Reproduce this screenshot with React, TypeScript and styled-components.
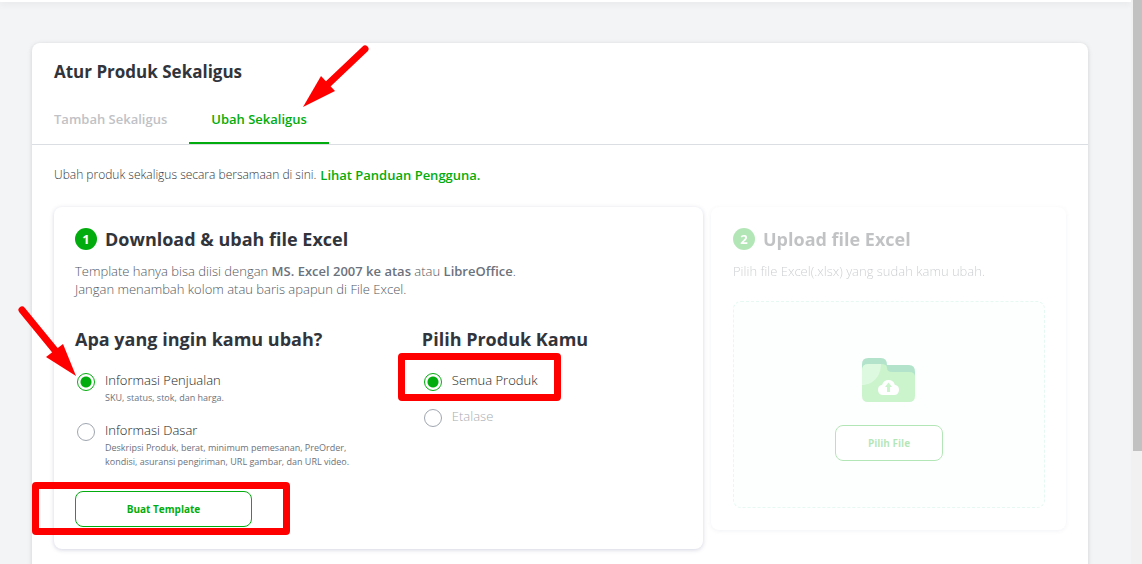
import React from "react";
import styled, { createGlobalStyle, css } from "styled-components";

const green = "#03ac0e";
const red = "#ff0000";

const GlobalStyle = createGlobalStyle`
  *, *::before, *::after { box-sizing: border-box; }
  body {
    margin: 0;
    background: #f3f4f5;
    color: #31353b;
    font-family: "Open Sans", sans-serif;
    font-size: 13px;
  }
  h1, h2, h3, p { margin: 0; }
`;

const Screen = styled.div`
  display: flex;
  height: 100vh;
  overflow: hidden;
`;

const Page = styled.div`
  flex: 1;
  min-width: 0;
`;

const TopBar = styled.header`
  height: 2px;
  background: #fff;
  box-shadow: 0 1px 6px rgba(49, 53, 59, 0.14);
`;

const ScrollTrack = styled.div`
  flex: none;
  width: 11px;
  padding-left: 2px;
  background: #f1f1f1;
`;

const ScrollThumb = styled.div`
  height: 80%;
  background: #c1c1c1;
`;

const Panel = styled.main`
  margin: 41px 43px 0 32px;
  min-height: 100vh;
  background: #fff;
  border-radius: 8px;
  box-shadow: 0 1px 4px rgba(108, 114, 124, 0.28);
`;

const Title = styled.h1`
  padding: 17px 22px 0;
  font-size: 17px;
  line-height: 24px;
  font-weight: 700;
`;

const Tabs = styled.nav`
  display: flex;
  margin-top: 10px;
  border-bottom: 1px solid #dbdee2;
`;

const Tab = styled.button<{ $active?: boolean }>`
  position: relative;
  height: 50px;
  padding: 2px 22px 0;
  border: 0;
  border-bottom: 2px solid ${(p) => (p.$active ? green : "transparent")};
  background: none;
  color: ${(p) => (p.$active ? green : "#bfc2c6")};
  font: 600 13px/20px "Open Sans", sans-serif;
  cursor: pointer;
`;

const Body = styled.div`
  padding: 20px 22px;
`;

const Intro = styled.p`
  display: flex;
  gap: 4px;
  margin-bottom: 22px;
  font-size: 12px;
  font-weight: 300;
  line-height: 20px;
`;

const GuideLink = styled.a`
  color: ${green};
  font-size: 13px;
  font-weight: 600;
  text-decoration: none;
`;

const Steps = styled.div`
  display: grid;
  grid-template-columns: 649fr 355fr;
  gap: 8px;
  align-items: start;
`;

const StepCard = styled.section<{ $disabled?: boolean }>`
  padding: 21px 21px 22px;
  border-radius: 8px;
  background: #fff;
  box-shadow: 0 1px 4px rgba(108, 114, 156, 0.3);
  ${(p) =>
    p.$disabled &&
    css`
      padding-left: 22px;
      opacity: 0.3;
    `}
`;

const StepHeading = styled.div`
  display: flex;
  align-items: center;
  gap: 8px;
`;

const StepNumber = styled.span`
  width: 22px;
  height: 22px;
  border-radius: 50%;
  background: ${green};
  color: #fff;
  font-size: 13px;
  line-height: 22px;
  font-weight: 700;
  text-align: center;
`;

const StepTitle = styled.h2`
  font-size: 18px;
  line-height: 22px;
  font-weight: 700;
`;

const StepText = styled.p`
  margin-top: 12px;
  font-weight: 300;
  line-height: 18px;
  color: #525860;
`;

const Strong = styled.strong`
  font-weight: 600;
  color: #6c727c;
`;

const Groups = styled.div`
  display: grid;
  grid-template-columns: 4fr 3fr;
  margin-top: 29px;
`;

const Group = styled.div`
  display: flex;
  flex-direction: column;
  align-items: flex-start;
`;

const GroupTitle = styled.h3`
  margin-bottom: 19px;
  font-size: 18px;
  line-height: 24px;
  font-weight: 700;
`;

const Options = styled.div`
  display: flex;
  flex-direction: column;
  align-items: flex-start;
  gap: 15px;
`;

const Option = styled.label<{ $muted?: boolean }>`
  position: relative;
  display: flex;
  gap: 10px;
  padding-left: 2px;
  font-weight: 300;
  line-height: 21px;
  color: ${(p) => (p.$muted ? "#a9adb2" : "#1b1e22")};
`;

const Radio = styled.input`
  appearance: none;
  flex: none;
  width: 18px;
  height: 18px;
  margin: 3px 0 0;
  border: 1px solid #9fa6b0;
  border-radius: 50%;
  background: #fff;
  &:checked {
    border-color: ${green};
    background: radial-gradient(circle, ${green} 5px, #fff 6px);
  }
`;

const OptionNote = styled.small`
  display: block;
  font-size: 9px;
  font-weight: 400;
  line-height: 14px;
  color: #6c727c;
`;

const OutlineButton = styled.button<{ $wide?: boolean }>`
  width: ${(p) => (p.$wide ? 177 : 108)}px;
  height: 36px;
  border: 1px solid ${green};
  border-radius: 8px;
  background: #fff;
  color: ${green};
  font: 700 10px/16px "Open Sans", sans-serif;
  cursor: pointer;
`;

const Action = styled.div`
  position: relative;
  width: fit-content;
  margin-top: 22px;
`;

const DropZone = styled.div`
  display: flex;
  flex-direction: column;
  align-items: center;
  gap: 23px;
  margin-top: 21px;
  padding: 56px 0 46px;
  border: 1px dashed #a9e6cf;
  border-radius: 8px;
  background: #f8fefc;
`;

const Frame = styled.span<{ $inset: string }>`
  position: absolute;
  inset: ${(p) => p.$inset};
  border: 7px solid ${red};
  border-radius: 4px;
  pointer-events: none;
`;

const ArrowSvg = styled.svg<{ $left: number; $top: number }>`
  position: absolute;
  left: ${(p) => p.$left}px;
  top: ${(p) => p.$top}px;
  overflow: visible;
  pointer-events: none;
`;

const TabArrow = () => (
  <ArrowSvg $left={114} $top={-50} width="66" height="64" aria-hidden="true">
    <path d="M62 5 23 42" stroke={red} strokeWidth="7" strokeLinecap="round" />
    <path d="M0 63 18 32 32 47Z" fill={red} />
  </ArrowSvg>
);

const OptionArrow = () => (
  <ArrowSvg $left={-58} $top={-65} width="60" height="72" aria-hidden="true">
    <path d="M5 5 41 49" stroke={red} strokeWidth="7" strokeLinecap="round" />
    <path d="M59 71 46 39 29 52Z" fill={red} />
  </ArrowSvg>
);

const FolderIcon = () => (
  <svg width="54" height="44" viewBox="0 0 54 44" aria-hidden="true">
    <path d="M0 18V6Q0 0 6 0H19Q25 0 25 7H47Q53 7 53 14V22H0Z" fill="#00a651" />
    <path d="M0 13Q0 6 6 6H19Q25 6 25 10Q25 14 30 14H47Q53 14 53 19V38Q53 44 47 44H6Q0 44 0 38Z" fill="#51d957" />
    <path d="M0 13Q0 6 6 6H19C19 18 11 27 0 27Z" fill="#8eec96" />
    <path d="M21 37a5.200 5.200 0 0 1-.8-10.300a6.600 6.600 0 0 1 12.600 0a5.200 5.200 0 0 1-.8 10.300Z" fill="#fff" />
    <path d="M26.500 24.500 30 29H28V34H25V29H23Z" fill="#51d957" />
  </svg>
);

export default function App() {
  return (
    <Screen>
      <GlobalStyle />
      <Page>
        <TopBar />
        <Panel>
          <Title>Atur Produk Sekaligus</Title>
          <Tabs>
            <Tab type="button">Tambah Sekaligus</Tab>
            <Tab type="button" $active>
              Ubah Sekaligus
              <TabArrow />
            </Tab>
          </Tabs>
          <Body>
            <Intro>
              <span>Ubah produk sekaligus secara bersamaan di sini.</span>
              <GuideLink href="#panduan">Lihat Panduan Pengguna.</GuideLink>
            </Intro>
            <Steps>
              <StepCard>
                <StepHeading>
                  <StepNumber>1</StepNumber>
                  <StepTitle>Download &amp; ubah file Excel</StepTitle>
                </StepHeading>
                <StepText>
                  Template hanya bisa diisi dengan <Strong>MS. Excel 2007 ke atas</Strong> atau{" "}
                  <Strong>LibreOffice</Strong>.
                  <br />
                  Jangan menambah kolom atau baris apapun di File Excel.
                </StepText>
                <Groups>
                  <Group>
                    <GroupTitle>Apa yang ingin kamu ubah?</GroupTitle>
                    <Options>
                      <Option>
                        <Radio type="radio" name="info" defaultChecked />
                        <span>
                          Informasi Penjualan
                          <OptionNote>SKU, status, stok, dan harga.</OptionNote>
                        </span>
                        <OptionArrow />
                      </Option>
                      <Option>
                        <Radio type="radio" name="info" />
                        <span>
                          Informasi Dasar
                          <OptionNote>
                            Deskripsi Produk, berat, minimum pemesanan, PreOrder,
                            <br />
                            kondisi, asuransi pengiriman, URL gambar, dan URL video.
                          </OptionNote>
                        </span>
                      </Option>
                    </Options>
                  </Group>
                  <Group>
                    <GroupTitle>Pilih Produk Kamu</GroupTitle>
                    <Options>
                      <Option>
                        <Radio type="radio" name="product" defaultChecked />
                        <span>Semua Produk</span>
                        <Frame $inset="-17px -23px -10px -24px" />
                      </Option>
                      <Option $muted>
                        <Radio type="radio" name="product" disabled />
                        <span>Etalase</span>
                      </Option>
                    </Options>
                  </Group>
                </Groups>
                <Action>
                  <OutlineButton type="button" $wide>
                    Buat Template
                  </OutlineButton>
                  <Frame $inset="-9px -38px -8px -43px" />
                </Action>
              </StepCard>
              <StepCard $disabled>
                <StepHeading>
                  <StepNumber>2</StepNumber>
                  <StepTitle>Upload file Excel</StepTitle>
                </StepHeading>
                <StepText>Pilih file Excel(.xlsx) yang sudah kamu ubah.</StepText>
                <DropZone>
                  <FolderIcon />
                  <OutlineButton type="button">Pilih File</OutlineButton>
                </DropZone>
              </StepCard>
            </Steps>
          </Body>
        </Panel>
      </Page>
      <ScrollTrack>
        <ScrollThumb />
      </ScrollTrack>
    </Screen>
  );
}
